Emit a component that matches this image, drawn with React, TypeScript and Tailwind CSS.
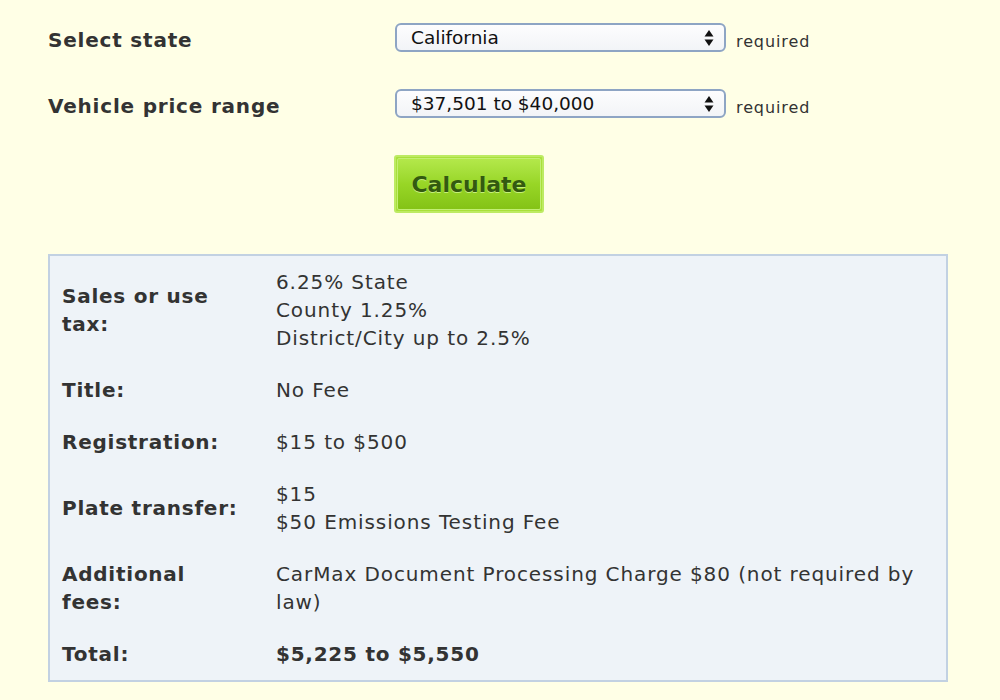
import React from 'react'

const rows: { label: string[]; value: string[]; bold?: boolean }[] = [
  { label: ['Sales or use', 'tax:'], value: ['6.25% State', 'County 1.25%', 'District/City up to 2.5%'] },
  { label: ['Title:'], value: ['No Fee'] },
  { label: ['Registration:'], value: ['$15 to $500'] },
  { label: ['Plate transfer:'], value: ['$15', '$50 Emissions Testing Fee'] },
  { label: ['Additional', 'fees:'], value: ['CarMax Document Processing Charge $80 (not required by', 'law)'] },
  { label: ['Total:'], value: ['$5,225 to $5,550'], bold: true },
]

const Arrows = () => (
  <svg width="10" height="18" viewBox="0 0 10 18" className="shrink-0">
    <path d="M5 1 L9.5 7.5 L0.5 7.5 Z" fill="#111" />
    <path d="M5 17 L9.5 10.5 L0.5 10.5 Z" fill="#111" />
  </svg>
)

const FakeSelect = ({ value }: { value: string }) => (
  <div className="flex items-center justify-between w-[331px] h-[29px] pl-[14px] pr-[10px] rounded-[6px] border-2 border-[#8ea5c4] bg-gradient-to-b from-[#fdfdfe] to-[#f2f4f7] text-[18.5px] text-[#111]">
    <span>{value}</span>
    <Arrows />
  </div>
)

const Field = ({ label, value }: { label: string; value: string }) => (
  <div className="flex items-center h-[29px]">
    <div className="w-[347px] text-[20px] font-bold tracking-[0.8px] text-[#333] mt-[4px]">{label}</div>
    <FakeSelect value={value} />
    <span className="ml-[10px] mt-[8px] text-[16px] tracking-[0.9px] text-[#333]">required</span>
  </div>
)

export default function App() {
  return (
    <div className="min-h-[700px] bg-[#ffffe6] font-['DejaVu_Sans',Verdana,sans-serif] pl-[48px] pt-[23px]">
      <div className="flex flex-col gap-[37px]">
        <Field label="Select state" value="California" />
        <Field label="Vehicle price range" value="$37,501 to $40,000" />
      </div>
      <div className="ml-[346px] mt-[37px] w-[150px] h-[58px] rounded-[3px] border-2 border-[#bdeb63] p-[1px] bg-[#a9e03a]">
        <div className="flex items-center justify-center h-full rounded-[2px] bg-gradient-to-b from-[#b3e84a] via-[#98d626] to-[#84c316] border border-[#c3ef74]">
          <span className="text-[22px] font-bold text-[#335a10] [text-shadow:0_1px_0_#c6f07a]">Calculate</span>
        </div>
      </div>
      <div className="mt-[41px] w-[900px] border-2 border-[#c2d1e2] bg-[#eef3f8] px-[12px]">
        {rows.map((r, i) => (
          <div key={i} className="flex items-center py-[12px] text-[20px] leading-[28px] text-[#333]">
            <div className="w-[214px] shrink-0 font-bold tracking-[0.75px]">
              {r.label.map((l) => (
                <div key={l}>{l}</div>
              ))}
            </div>
            <div className={r.bold ? 'font-bold tracking-[0.75px]' : 'tracking-[0.9px]'}>
              {r.value.map((v) => (
                <div key={v}>{v}</div>
              ))}
            </div>
          </div>
        ))}
      </div>
    </div>
  )
}
